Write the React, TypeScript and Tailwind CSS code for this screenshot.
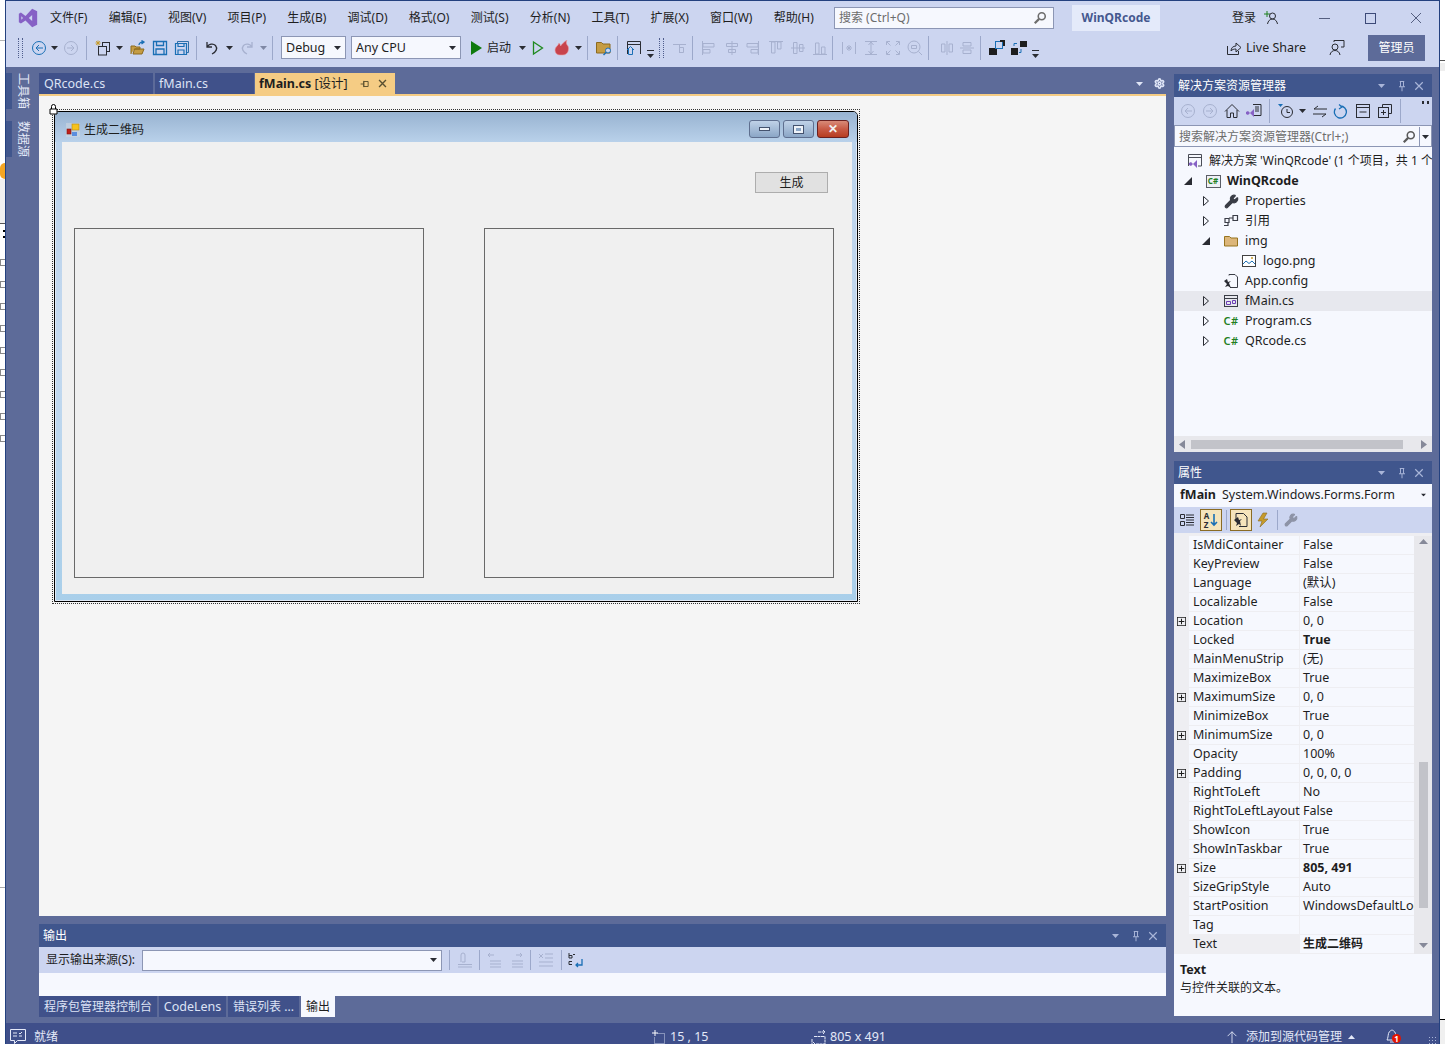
import type { ReactNode } from 'react';
import { Settings, Wrench } from 'lucide-react';

const menus = ['文件(F)', '编辑(E)', '视图(V)', '项目(P)', '生成(B)', '调试(D)', '格式(O)', '测试(S)', '分析(N)', '工具(T)', '扩展(X)', '窗口(W)', '帮助(H)'];

const props: { name: string; value: string; expand?: boolean; bold?: boolean; active?: boolean }[] = [
  { name: 'IsMdiContainer', value: 'False' },
  { name: 'KeyPreview', value: 'False' },
  { name: 'Language', value: '(默认)' },
  { name: 'Localizable', value: 'False' },
  { name: 'Location', value: '0, 0', expand: true },
  { name: 'Locked', value: 'True', bold: true },
  { name: 'MainMenuStrip', value: '(无)' },
  { name: 'MaximizeBox', value: 'True' },
  { name: 'MaximumSize', value: '0, 0', expand: true },
  { name: 'MinimizeBox', value: 'True' },
  { name: 'MinimumSize', value: '0, 0', expand: true },
  { name: 'Opacity', value: '100%' },
  { name: 'Padding', value: '0, 0, 0, 0', expand: true },
  { name: 'RightToLeft', value: 'No' },
  { name: 'RightToLeftLayout', value: 'False' },
  { name: 'ShowIcon', value: 'True' },
  { name: 'ShowInTaskbar', value: 'True' },
  { name: 'Size', value: '805, 491', expand: true, bold: true },
  { name: 'SizeGripStyle', value: 'Auto' },
  { name: 'StartPosition', value: 'WindowsDefaultLocation' },
  { name: 'Tag', value: '' },
  { name: 'Text', value: '生成二维码', bold: true, active: true },
];

const OFF = '#a7b1cf';
const BLUE = '#1a6fb5';
const INK = '#2a2c33';

// 16x16 绘图容器
const Ico = ({ children, className = '', size = 16 }: { children: ReactNode; className?: string; size?: number }) => (
  <svg width={size} height={size} viewBox="0 0 16 16" fill="none" className={`shrink-0 ${className}`}>
    {children}
  </svg>
);

const Caret = ({ className = '', color = '#2a2c33' }: { className?: string; color?: string }) => (
  <svg width="7" height="4" viewBox="0 0 7 4" className={`shrink-0 ${className}`}>
    <path d="M0 0h7L3.5 4z" fill={color} />
  </svg>
);

const Sep = ({ className = '' }: { className?: string }) => <span className={`h-[24px] w-px shrink-0 bg-[#9ca8ca] ${className}`} />;
const Grip = ({ className = '' }: { className?: string }) => <span className={`h-[20px] w-[5px] shrink-0 border-x border-dotted border-[#4f5d8c] ${className}`} />;

const Overflow = ({ className = '' }: { className?: string }) => (
  <svg width="7" height="8" viewBox="0 0 7 8" className={`shrink-0 ${className}`}>
    <path d="M0 0h7v1H0zM0 4h7L3.5 8z" fill="#2a2c33" />
  </svg>
);

const Circle = ({ dir, color, className = '' }: { dir: 'l' | 'r'; color: string; className?: string }) => (
  <Ico className={className}>
    <circle cx="8" cy="8" r="6.5" stroke={color} />
    <path d={dir === 'l' ? 'M12 8H5M8 5L5 8l3 3' : 'M4 8h7M8 5l3 3-3 3'} stroke={color} />
  </Ico>
);

const VsMark = ({ size, className = '' }: { size: number; className?: string }) => (
  <svg width={size} height={size} viewBox="0 0 24 24" className={`shrink-0 ${className}`}>
    <path fillRule="evenodd" d="M17 1l6 3v16l-6 3-8-8-5.500 3.500L1 17V7l2.500-1.500L9 9.500zM17 8.500L13 12l4 3.500zM4 10v4l2-2z" fill="#8661c5" />
  </svg>
);

const Disabled = ({ d, className = '' }: { d: string; className?: string }) => (
  <Ico className={className}>
    <path d={d} stroke={OFF} />
  </Ico>
);

const PanelHeader = ({ title, icons = '#a9b5d8' }: { title: string; icons?: string }) => (
  <div className="flex h-[23px] shrink-0 items-center bg-[#40568d] pl-[4px] text-[12px] text-white">
    <span className="flex-1">{title}</span>
    <Caret color={icons} />
    <Ico size={12} className="ml-[11px]">
      <path d="M5 2h6M6 2v7M10 2v7M4 9h8M8 9v6" stroke={icons} strokeWidth="1.300" />
    </Ico>
    <Ico size={12} className="ml-[5px] mr-[7px]">
      <path d="M3 3l10 10M13 3L3 13" stroke={icons} strokeWidth="1.600" />
    </Ico>
  </div>
);

const CSharp = ({ className = '' }: { className?: string }) => (
  <span className={`w-[16px] shrink-0 text-center text-[11px] font-semibold tracking-[0.5px] text-[#1f801f] ${className}`}>C#</span>
);

const TreeRow = ({ arrow, indent, icon, children, selected, bold, noSlot }: { arrow?: 'open' | 'closed'; indent: string; icon: ReactNode; children: ReactNode; selected?: boolean; bold?: boolean; noSlot?: boolean }) => (
  <div className={`flex h-[20px] items-center whitespace-nowrap ${indent} ${selected ? 'bg-[#e7e8ee]' : ''} ${bold ? 'font-bold' : ''}`}>
    {!noSlot && (
      <span className="mr-[12px] flex w-[16px] shrink-0 items-center justify-center pl-[5px]">
        {arrow === 'closed' && (
          <svg width="6" height="10" viewBox="0 0 6 10"><path d="M.500.500l5 4.500-5 4.500z" stroke="#2a2c33" fill="none" /></svg>
        )}
        {arrow === 'open' && (
          <svg width="8" height="8" viewBox="0 0 8 8"><path d="M8 0v8H0z" fill="#2a2c33" /></svg>
        )}
      </span>
    )}
    <span className="flex w-[16px] shrink-0 items-center justify-center">{icon}</span>
    <span className="ml-[6px]">{children}</span>
  </div>
);

const CaptionBtn = ({ children, className = '' }: { children: ReactNode; className?: string }) => (
  <span className={`flex h-[18px] items-center justify-center rounded-[3px] border border-[#5f6f8f] ${className}`}>{children}</span>
);

export default function App() {
  return (
    <div className="relative flex h-[1044px] w-[1445px] overflow-hidden bg-white font-['Noto_Sans','Noto_Sans_CJK_SC',sans-serif] text-[12.500px] leading-[18px] text-[#1e1e1e]">
      {/* 后面窗口露出的左边条 */}
      <div className="flex w-[5px] shrink-0 flex-col">
        <div className="mt-[40px] h-px bg-[#b5b5b5]" />
        <div className="mt-[122px] h-[16px] rounded-l-full bg-[#f5a623]" />
        <div className="h-[44px] bg-[#f0f0f0]" />
        <div className="h-px bg-[#555]" />
        <div className="ml-[3px] mt-[6px] h-[2px] w-[2px] bg-black" />
        <div className="ml-[3px] mt-[4px] h-[2px] w-[2px] bg-black" />
        {Array.from({ length: 9 }).map((_, i) => (
          <div key={i} className={`h-[7px] border border-r-0 border-[#888] bg-white ${i === 0 ? 'mt-[21px]' : 'mt-[15px]'}`} />
        ))}
        <div className="mt-[445px] h-px bg-[#aaa]" />
      </div>

      <div className="flex w-[1435px] shrink-0 flex-col border-x border-t border-[#24417f]">
        {/* 菜单栏 */}
        <div className="flex h-[32px] shrink-0 items-center whitespace-nowrap bg-[#ccd5f0] pt-[1px]">
          <VsMark size={20} className="ml-[12px]" />
          <div className="ml-[12px] flex w-[764px] shrink-0 justify-between text-[12px]">
            {menus.map((m) => (
              <span key={m}>{m}</span>
            ))}
          </div>
          <div className="ml-[20px] flex h-[22px] w-[220px] shrink-0 items-center border border-[#8c96b4] bg-[#f6f8fe] pl-[4px] pr-[6px] text-[12px] text-[#6d6d6d]">
            <span className="flex-1">搜索 (Ctrl+Q)</span>
            <Ico size={14}><circle cx="10" cy="6" r="4" stroke="#6d6d6d" strokeWidth="1.800" /><path d="M7 9l-5 5" stroke="#6d6d6d" strokeWidth="2.500" /></Ico>
          </div>
          <div className="ml-[18px] flex h-[26px] w-[88px] shrink-0 items-center justify-center bg-[#e4eafa] text-[12px] font-bold text-[#45588f]">WinQRcode</div>
          <span className="ml-[72px] w-[24px] shrink-0 text-[12px]">登录</span>
          <Ico className="ml-[8px]">
            <path d="M2 1v6M-1 4h6" stroke="#1f801f" transform="translate(1 0)" />
            <circle cx="8.500" cy="6" r="3" stroke={INK} />
            <path d="M3.500 14c.5-3 2.500-5 5-5s4.500 2 5 5" stroke={INK} />
          </Ico>
          <Ico className="ml-[36px]"><path d="M3 8.500h11" stroke="#555f80" /></Ico>
          <Ico className="ml-[30px]"><rect x="3.500" y="3.500" width="10" height="10" stroke="#3c4a78" /></Ico>
          <Ico className="ml-[30px]"><path d="M3 3l10 10M13 3L3 13" stroke="#555f80" /></Ico>
        </div>

        {/* 工具栏 */}
        <div className="flex h-[34px] shrink-0 items-center bg-[#ccd5f0] pb-[5px]">
          <Grip className="ml-[12px]" />
          <Circle dir="l" color={BLUE} className="ml-[8px]" />
          <Caret className="ml-[4px]" />
          <Circle dir="r" color={OFF} className="ml-[5px]" />
          <Sep className="ml-[7px]" />
          <Ico className="ml-[8px]">
            <path d="M3 .5v5M.5 3h5M1.200 1.200l3.600 3.600M4.800 1.200L1.200 4.800" stroke="#c69b2b" />
            <rect x="7.500" y="2.500" width="7" height="9" stroke={INK} fill="#ccd5f0" />
            <rect x="3.500" y="6.500" width="8" height="8.500" stroke={INK} fill="#ccd5f0" />
          </Ico>
          <Caret className="ml-[5px]" />
          <Ico className="ml-[7px]">
            <path d="M1 14V6h4l1 1h4v2H4.500L3 14h9l2-5H4.500" fill="#c59c43" stroke="#8c6a1f" />
            <path d="M9 5c0-2 2-3 4-3M11.500 .5L14 2l-2.500 2" stroke={BLUE} strokeWidth="1.300" />
          </Ico>
          <Ico className="ml-[6px]">
            <path d="M1.500 1.500h13v13h-13zM4.500 1.500v4h7v-4M4 14.500V9h8v5.500" stroke={BLUE} strokeWidth="1.300" />
          </Ico>
          <Ico className="ml-[6px]">
            <path d="M3.500 3V1.500h11v11H13" stroke="#2f6fa8" />
            <path d="M1.500 3.500h11v11h-11zM4 3.500v3h6v-3M4 14.500V10h6v4.500" stroke={BLUE} strokeWidth="1.200" />
          </Ico>
          <Sep className="ml-[6px]" />
          <Ico className="ml-[7px]">
            <path d="M3 2v5h5M3 7c2-3 6-4 8.500-1.500 2.500 3 .5 6.500-3.500 8.500" stroke={INK} strokeWidth="1.300" />
          </Ico>
          <Caret className="ml-[6px]" />
          <Ico className="ml-[6px] -scale-x-100">
            <path d="M3 2v5h5M3 7c2-3 6-4 8.500-1.500 2.500 3 .5 6.500-3.500 8.500" stroke={OFF} strokeWidth="1.300" />
          </Ico>
          <Caret className="ml-[5px]" color="#7f88a5" />
          <Sep className="ml-[5px]" />
          <div className="ml-[8px] flex h-[23px] w-[65px] shrink-0 items-center justify-between border border-[#8c96b4] bg-[#f6f8fe] pl-[4px] pr-[4px]">
            <span>Debug</span>
            <Caret />
          </div>
          <div className="ml-[5px] flex h-[23px] w-[110px] shrink-0 items-center justify-between border border-[#8c96b4] bg-[#f6f8fe] pl-[4px] pr-[4px]">
            <span>Any CPU</span>
            <Caret />
          </div>
          <Ico className="ml-[7px]"><path d="M3 1l11 7-11 7z" fill="#0e7a0d" /></Ico>
          <span className="ml-[3px] w-[26px] shrink-0 text-[12px]">启动</span>
          <Caret className="ml-[6px]" />
          <Ico className="ml-[4px]"><path d="M3.500 2l9 6-9 6z" stroke="#1f8a1f" strokeWidth="1.300" /></Ico>
          <Ico className="ml-[8px]">
            <path d="M6 15c-3 0-5-2-5-5 0-3 3-4 4-7 1 1 1.500 2 1.500 3C8 4 10 2 13 0c-1 2-1 4 1 6 1.500 3 0 9-5 9z" fill="#c8434c" stroke="#e9a0a6" strokeWidth=".6" />
          </Ico>
          <Caret className="ml-[5px]" />
          <Sep className="ml-[5px]" />
          <Ico className="ml-[8px]">
            <path d="M.5 2.500h5l1.500 1.500h7v9H.5z" fill="#c59c43" stroke="#8c6a1f" />
            <circle cx="12" cy="10.500" r="2.500" fill="#ccd5f0" stroke={BLUE} />
            <path d="M10 12.500L7.500 15" stroke={BLUE} strokeWidth="1.500" />
          </Ico>
          <Sep className="ml-[5px]" />
          <Ico className="ml-[8px]">
            <path d="M1.500 14V1.500h13V14M1.500 4.500h13" stroke={INK} />
            <path d="M1 10l3.500-3.500L8 10M2.500 9v5.500h4V9" stroke={BLUE} fill="#ccd5f0" />
          </Ico>
          <Overflow className="ml-[5px] mt-[12px]" />
          <Grip className="ml-[5px]" />
          <Disabled className="ml-[8px]" d="M1 4.500h13M7.500 4.500V13M7.500 7.500h4v5h-4" />
          <Sep className="ml-[4px]" />
          <Disabled className="ml-[8px]" d="M1.500 1v14M2 3.500h11v3.500H2zM2 9.500h7v3.500H2z" />
          <Disabled className="ml-[7px]" d="M8 1v14M2.500 3.500h11v3h-11zM4.500 9.500h7v3h-7z" />
          <Disabled className="ml-[4px]" d="M14.500 1v14M3 3.500h11v3.500H3zM7 9.500h7v3.500H7z" />
          <Disabled className="ml-[8px]" d="M1 1.500h14M3.500 2v11H7V2zM9.500 2v7H13V2z" />
          <Disabled className="ml-[6px]" d="M1 8h14M3.500 2.500H7v11H3.500zM9.500 4.500H13v7H9.500z" />
          <Disabled className="ml-[6px]" d="M1 14.500h14M3.500 3H7v11H3.500zM9.500 7H13v7H9.500z" />
          <Sep className="ml-[4px]" />
          <Disabled className="ml-[8px]" d="M1.500 2v12M14.500 2v12M5 8h6M8 5v6M6 6l4 4M10 6l-4 4" />
          <Disabled className="ml-[6px]" d="M2 1.500h12M2 14.500h12M8 2v12M5.500 5L8 2l2.500 3M5.500 11L8 14l2.500-3" />
          <Disabled className="ml-[6px]" d="M1.500 5V1.500H5M11 1.500h3.500V5M14.500 11v3.500H11M5 14.500H1.500V11M2 2l3.500 3.500M14 2l-3.500 3.500M14 14l-3.500-3.500M2 14l3.500-3.500" />
          <Ico className="ml-[6px]"><circle cx="7" cy="7" r="6" stroke={OFF} /><path d="M11.500 11.500L15 15M4.500 5.500v3h5v-3z" stroke={OFF} /></Ico>
          <Sep className="ml-[5px]" />
          <Disabled className="ml-[10px]" d="M8 1v14M2.500 4H6v8H2.500zM10 4h3.500v8H10z" />
          <Disabled className="ml-[4px]" d="M1 8h14M4 2.500h8V6H4zM4 10h8v3.500H4z" />
          <Sep className="ml-[5px]" />
          <Ico className="ml-[8px]">
            <path d="M0 8h8v7H0z" fill="#1e1e1e" />
            <rect x="6.500" y="1.500" width="7" height="7" fill="#ccd5f0" stroke={BLUE} />
            <path d="M11 0h5v6h-2V2h-3z" fill="#1e1e1e" />
          </Ico>
          <Ico className="ml-[6px]">
            <path d="M0 8h7v7H0zM9 1h7v6H9z" fill="#1e1e1e" />
            <path d="M3 6V3.500h3M10 9v3.500H8" stroke={BLUE} />
          </Ico>
          <Overflow className="ml-[5px] mt-[12px]" />
          <Ico className="ml-[187px]">
            <path d="M1.500 6v8.500h11V11" stroke={INK} />
            <path d="M5 11c0-3 2-5 5-5V3l5 4.500L10 12V9c-2 0-4 .5-5 2z" stroke={INK} />
          </Ico>
          <span className="ml-[4px] w-[66px] shrink-0 whitespace-nowrap">Live Share</span>
          <Ico className="ml-[17px]">
            <circle cx="6" cy="7" r="3" stroke={INK} />
            <path d="M1 15c.5-3 2.500-4.500 5-4.500s4.500 1.500 5 4.500M5 2V.5h10V7h-3" stroke={INK} />
          </Ico>
          <div className="ml-[23px] flex h-[26px] w-[57px] shrink-0 items-center justify-center bg-[#5d6b99] text-[12px] text-white">管理员</div>
        </div>

        {/* 主体 */}
        <div className="flex min-h-0 flex-1 bg-[#5d6b99]">
          {/* 侧边工具条 */}
          <div className="flex w-[33px] shrink-0 flex-col gap-[12px] pt-[6px]">
            {['工具箱', '数据源'].map((t) => (
              <div key={t} className="flex h-[36px]">
                <span className="w-[6px] bg-[#40568d]" />
                <span className="ml-[4px] text-[12px] leading-[14px] text-[#e4e9f8] [text-orientation:sideways] [writing-mode:vertical-lr]">{t}</span>
              </div>
            ))}
          </div>

          {/* 中间 */}
          <div className="flex w-[1127px] shrink-0 flex-col">
            <div className="mt-[6px] flex h-[21px] shrink-0 items-center">
              <div className="flex h-full w-[114px] items-center bg-[#40518a] pl-[5px] text-[#dde3f5]">QRcode.cs</div>
              <div className="ml-[2px] flex h-full w-[99px] items-center bg-[#40518a] pl-[4px] text-[#dde3f5]">fMain.cs</div>
              <div className="ml-px flex h-full w-[140px] items-center whitespace-nowrap bg-[#f5cc84] pl-[4px]">
                <span className="w-[96px] font-bold">fMain.cs <span className="font-normal">[设计]</span></span>
                <Ico size={10} className="ml-[5px]"><path d="M1 8h5M6 4h7v8H6zM6 3v10" stroke="#5a5030" strokeWidth="1.500" /></Ico>
                <Ico size={11} className="ml-[7px]"><path d="M3 3l10 10M13 3L3 13" stroke="#5a5030" strokeWidth="2" /></Ico>
              </div>
              <Caret className="ml-auto" color="#dfe5f6" />
              <Settings size={11} strokeWidth={3.500} className="ml-[11px] mr-[1px] text-[#dfe5f6]" />
            </div>
            <div className="h-[2px] shrink-0 bg-[#f5cc84]" />

            {/* 设计器 */}
            <div className="h-[820px] shrink-0 bg-[#f5f5f5] pl-[13px] pt-[13px]">
              <div className="relative h-[495px] w-[808px] border border-dotted border-[#333] p-px">
                <svg width="9" height="11" viewBox="0 0 9 11" className="absolute -left-[4px] -top-[6px]">
                  <path d="M1 5h7v5H1zM2.500 5V2.500a2 2 0 014 0V5" stroke="#000" fill="#fff" />
                </svg>
                <div className="flex h-full flex-col rounded-t-[5px] border border-black bg-gradient-to-b from-[#b9d1ea] via-[#c4d9ef] to-[#a9cfea] shadow-[inset_0_0_0_1px_#dfe9f5]">
                  <div className="flex h-[30px] shrink-0 items-center rounded-t-[4px] bg-gradient-to-b from-[#98b3d1] to-[#b9d1ea] pl-[11px] pt-[6px]">
                    <svg width="14" height="14" viewBox="0 0 14 14" className="shrink-0">
                      <rect x="0" y="0" width="14" height="14" fill="#d5d9e0" opacity=".5" />
                      <rect x="6" y="1" width="7" height="6" fill="#f6c21c" stroke="#b98a10" strokeWidth=".6" />
                      <rect x="1" y="6" width="4" height="5" fill="#c0201a" stroke="#801510" strokeWidth=".6" />
                      <rect x="6" y="9" width="5" height="4" fill="#5b8ede" />
                    </svg>
                    <span className="ml-[4px] text-[12px]">生成二维码</span>
                    <div className="ml-[605px] -mt-[2px] flex gap-[3px]">
                      <CaptionBtn className="w-[31px] bg-gradient-to-b from-[#c0d2e8] to-[#8ba6c6]">
                        <span className="h-[4px] w-[11px] border border-[#44526e] bg-[#eef2f8]" />
                      </CaptionBtn>
                      <CaptionBtn className="w-[31px] bg-gradient-to-b from-[#c0d2e8] to-[#8ba6c6]">
                        <span className="flex h-[9px] w-[11px] items-center justify-center border border-[#44526e] bg-[#eef2f8]"><span className="h-[3px] w-[5px] bg-[#8ba6c6]" /></span>
                      </CaptionBtn>
                      <CaptionBtn className="w-[32px] border-[#6a2020] bg-gradient-to-b from-[#d88a78] via-[#c85a45] to-[#b63c20]">
                        <span className="text-[12px] font-bold leading-none text-[#f2f2f2]">✕</span>
                      </CaptionBtn>
                    </div>
                  </div>
                  <div className="ml-[7px] h-[452px] w-[790px] shrink-0 bg-[#f0f0f0] pt-[30px]">
                    <div className="ml-[693px] flex h-[21px] w-[73px] items-center justify-center border border-[#adadad] bg-[#e1e1e1] pt-px text-[12px]">生成</div>
                    <div className="ml-[12px] mt-[35px] flex gap-[60px]">
                      <div className="h-[350px] w-[350px] border border-[#696969]" />
                      <div className="h-[350px] w-[350px] border border-[#696969]" />
                    </div>
                  </div>
                </div>
              </div>
            </div>

            {/* 输出 */}
            <div className="mt-[8px] flex min-h-0 flex-1 flex-col">
              <PanelHeader title="输出" />
              <div className="flex h-[26px] shrink-0 items-center bg-[#ccd5f0]">
                <span className="ml-[7px] w-[96px] shrink-0 whitespace-nowrap text-[12px]">显示输出来源(S):</span>
                <div className="flex h-[21px] w-[300px] shrink-0 items-center justify-end border border-[#8c96b4] bg-[#f6f8fe] pr-[4px]"><Caret /></div>
                <Sep className="ml-[7px] !h-[20px]" />
                <Disabled className="ml-[7px]" d="M4 10V3a2 2 0 014 0v7H5M1 12.500h14M1 15h14" />
                <Sep className="ml-[6px] !h-[20px]" />
                <Disabled className="ml-[6px]" d="M8 3H2M4 1L2 3l2 2M4 9h11M4 12h11M4 15h11" />
                <Disabled className="ml-[6px]" d="M8 3h6M12 1l2 2-2 2M4 9h11M4 12h11M4 15h11" />
                <Sep className="ml-[6px] !h-[20px]" />
                <Disabled className="ml-[7px]" d="M1 2l4 4M5 2L1 6M7 2h8M7 6h8M1 10h14M1 14h14" />
                <Sep className="ml-[7px] !h-[20px]" />
                <Ico className="ml-[6px]">
                  <path d="M1 1v5h3V3.500H1M7 2.500H5M1 9.500h3M1 9.500v3h3" stroke={INK} />
                  <path d="M14 7v6H8M10 11l-2 2 2 2" stroke={BLUE} strokeWidth="1.300" />
                </Ico>
              </div>
              <div className="h-[23px] shrink-0 bg-[#f6f8fe]" />
              <div className="flex h-[21px] shrink-0 items-center whitespace-nowrap text-[#dde3f5]">
                <span className="flex h-full w-[118px] items-center justify-center bg-[#40518a] text-[12px]">程序包管理器控制台</span>
                <span className="ml-[2px] flex h-full w-[67px] items-center justify-center bg-[#40518a]">CodeLens</span>
                <span className="ml-[2px] flex h-full w-[71px] items-center justify-center bg-[#40518a] text-[12px]">错误列表 ...</span>
                <span className="ml-[2px] flex h-full w-[34px] items-center justify-center bg-[#f6f8fe] text-[12px] text-[#1e1e1e]">输出</span>
              </div>
            </div>
          </div>

          {/* 右侧面板 */}
          <div className="ml-[8px] flex w-[258px] shrink-0 flex-col pt-[7px]">
            <PanelHeader title="解决方案资源管理器" />
            <div className="relative flex h-[28px] shrink-0 items-center bg-[#ccd5f0]">
              <Circle dir="l" color={OFF} className="ml-[6px]" />
              <Circle dir="r" color={OFF} className="ml-[6px]" />
              <Ico className="ml-[6px]"><path d="M1 8.500L8 1.500l7 7M3 7v7.500h3.500V10h3v4.500H13V7" stroke={INK} /></Ico>
              <Ico className="ml-[6px]">
                <path d="M7 1.500h8v11H7" stroke={INK} />
                <path d="M9 4h4M9 6h4M9 8h4" stroke={INK} />
                <path d="M0 9l2-1 2 2 4-4v8l-4-4-2 2-2-1z" fill="#8661c5" />
              </Ico>
              <Sep className="ml-[7px]" />
              <Ico className="ml-[8px]">
                <path d="M0 1h5L2.500 4z" fill={BLUE} />
                <circle cx="9" cy="9" r="5.500" stroke={INK} />
                <path d="M9 6v3.500h3" stroke={INK} />
              </Ico>
              <Caret className="ml-[5px]" />
              <Ico className="ml-[6px]"><path d="M6 3L2 6h13M10 14l4-3H1" stroke={INK} /></Ico>
              <Ico className="ml-[5px]"><path d="M6 1.500L9 4 6 6M7 3a6 6 0 11-4.500 2.500" stroke={BLUE} strokeWidth="1.300" /></Ico>
              <Ico className="ml-[6px]"><rect x="1.500" y="1.500" width="13" height="13" stroke={INK} /><path d="M1 4.500h14M4.500 9h7" stroke={INK} /></Ico>
              <Ico className="ml-[6px]"><path d="M5.500 4.500v-3h9v9h-3" stroke={INK} /><rect x="1.500" y="4.500" width="10" height="10" stroke={INK} /><path d="M4 9.500h5M6.500 7v5" stroke={INK} /></Ico>
              <Sep className="ml-[7px]" />
              <span className="absolute right-[3px] top-[4px] flex gap-[3px]">
                <span className="h-[3px] w-[2px] bg-[#2a2c33]" />
                <span className="h-[3px] w-[2px] bg-[#2a2c33]" />
              </span>
            </div>
            <div className="flex h-[22px] shrink-0 items-center border border-[#8c96b4] bg-[#f6f8fe] pl-[4px] pt-px text-[12px] text-[#6d6d6d]">
              <span className="flex-1 whitespace-nowrap">搜索解决方案资源管理器(Ctrl+;)</span>
              <Ico size={14} className="mr-[3px]"><circle cx="10" cy="6" r="4" stroke="#5a5a5a" strokeWidth="1.800" /><path d="M7 9l-5 5" stroke="#5a5a5a" strokeWidth="2.500" /></Ico>
              <span className="flex h-full w-[12px] items-center justify-center border-l border-[#8c96b4]"><Caret /></span>
            </div>

            <div className="flex h-[305px] shrink-0 flex-col overflow-hidden bg-[#f6f8fe]">
              <div className="flex-1 overflow-hidden pt-[4px]">
                <TreeRow noSlot indent="pl-[13px] text-[12px]" icon={
                  <Ico>
                    <path d="M1.500 13V1.500h13V13H11M1.500 4.500h13" stroke="#4a4d57" />
                    <path d="M2 10l2-1 2 2 4-4v8l-4-4-2 2-2-1z" fill="#8661c5" />
                  </Ico>
                }>
                  <span>解决方案 'WinQRcode' (1 个项目，共 1 个)</span>
                </TreeRow>
                <TreeRow arrow="open" indent="pl-[3px]" bold icon={
                  <span className="flex h-[13px] w-[15px] items-center justify-center border border-[#5a5d66] bg-[#eef0f5] text-[8px] font-bold leading-none text-[#1f801f]">C#</span>
                }>WinQRcode</TreeRow>
                <TreeRow arrow="closed" indent="pl-[21px]" icon={<Wrench size={15} className="fill-[#3a3d46] text-[#3a3d46]" />}>Properties</TreeRow>
                <TreeRow arrow="closed" indent="pl-[21px]" icon={
                  <Ico><path d="M10 2.500h4.500v5H10zM2 5.500h4v4H2zM10 5H6M1 12.500h4v-3" stroke="#3a3d46" strokeWidth="1.200" /></Ico>
                }>引用</TreeRow>
                <TreeRow arrow="open" indent="pl-[21px]" icon={
                  <Ico><path d="M1.500 13V3.500h5L8 5h6.500v8z" fill="#dcb67a" stroke="#97741f" /></Ico>
                }>img</TreeRow>
                <TreeRow indent="pl-[39px]" icon={
                  <Ico><rect x="1.500" y="2.500" width="13" height="11" fill="#fff" stroke="#424242" /><path d="M2 11l3-3 3 2.500L11 8l3 3" stroke={BLUE} /><circle cx="11" cy="5" r="1" fill="#c69b2b" /></Ico>
                }>logo.png</TreeRow>
                <TreeRow indent="pl-[21px]" icon={
                  <Ico><path d="M6 2.500V1.500h6l2.500 2.500v10.500H7" stroke="#3a3d46" /><path d="M1 8l3 3-2 3 3-1 3 2-2-5 2-2-3 1-1-3z" fill="#2a2c33" /></Ico>
                }>App.config</TreeRow>
                <TreeRow arrow="closed" indent="pl-[21px]" selected icon={
                  <Ico><rect x="1.500" y="2.500" width="13" height="11" stroke="#3a3d46" /><path d="M1.500 5.500h13" stroke="#3a3d46" /><path d="M3.500 8.500h4v3h-4zM9.500 7.500h3v3h-3z" stroke="#6c3fb5" /></Ico>
                }>fMain.cs</TreeRow>
                <TreeRow arrow="closed" indent="pl-[21px]" icon={<CSharp />}>Program.cs</TreeRow>
                <TreeRow arrow="closed" indent="pl-[21px]" icon={<CSharp />}>QRcode.cs</TreeRow>
              </div>
              <div className="flex h-[16px] shrink-0 items-center bg-[#e8e8ec] px-[5px]">
                <svg width="6" height="9" viewBox="0 0 6 9"><path d="M6 0v9L0 4.500z" fill="#868999" /></svg>
                <span className="ml-[6px] h-[9px] w-[212px] bg-[#c2c3c9]" />
                <svg width="6" height="9" viewBox="0 0 6 9" className="ml-auto"><path d="M0 0v9l6-4.500z" fill="#868999" /></svg>
              </div>
            </div>

            <div className="mt-[9px] flex min-h-0 flex-1 flex-col">
              <PanelHeader title="属性" />
              <div className="flex h-[23px] shrink-0 items-center whitespace-nowrap bg-[#f6f8fe] pb-[2px] pl-[6px]">
                <span className="font-bold">fMain</span>
                <span className="ml-[6px] flex-1">System.Windows.Forms.Form</span>
                <Caret className="mr-[5px] scale-75" />
              </div>
              <div className="flex h-[26px] shrink-0 items-center bg-[#ccd5f0] pl-[5px]">
                <Ico>
                  <path d="M1.500 2.500h4v4h-4zM1.500 9.500h4v4h-4zM7 3h8M7 5.500h8M7 8h8M7 10.500h8M7 13h8" stroke={INK} />
                </Ico>
                <span className="ml-[5px] flex h-[22px] w-[22px] items-center justify-center gap-px border border-[#8a6b24] bg-[#f5e4bc]">
                  <span className="flex flex-col text-[8px] font-bold leading-[9px] text-[#2a2c33]">
                    <span>A</span>
                    <span>Z</span>
                  </span>
                  <svg width="8" height="14" viewBox="0 0 8 14"><path d="M4 1v11M1 9l3 3 3-3" stroke={BLUE} strokeWidth="1.600" fill="none" /></svg>
                </span>
                <Sep className="ml-[4px] !h-[20px]" />
                <span className="ml-[3px] flex h-[22px] w-[22px] items-center justify-center border border-[#8a6b24] bg-[#f5e4bc]">
                  <Ico><path d="M3 8V1.500h7.500L14 5v9.500H6" stroke={INK} /><path d="M1 8l3 3-1 3 3-2 2 2-1-5 2-2-3 1-1-3z" fill="#2a2c33" /></Ico>
                </span>
                <Ico className="ml-[3px]"><path d="M8 1L3 9h4l-2 6 8-8H8.500L12 1z" fill="#c69b2b" stroke="#8a6b24" strokeWidth=".6" /></Ico>
                <Sep className="ml-[6px] !h-[20px]" />
                <Wrench size={14} className="ml-[6px] fill-[#8d93a6] text-[#8d93a6]" />
              </div>
              <div className="flex h-[421px] shrink-0 overflow-hidden bg-[#eeeef2] pt-[3px]">
                <div className="w-[240px] shrink-0">
                  {props.map((p) => (
                    <div key={p.name} className="flex h-[19px] items-center whitespace-nowrap">
                      <span className="flex w-[15px] shrink-0 justify-center">
                        {p.expand && (
                          <Ico size={9}><path d="M.500.500h15v15H.500zM3 8h10M8 3v10" stroke="#1e1e1e" strokeWidth="1.800" /></Ico>
                        )}
                      </span>
                      <span className={`flex h-full w-[111px] shrink-0 items-center border-b border-r border-[#eeeef2] pl-[4px] ${p.active ? 'bg-[#eeeef2]' : 'bg-[#f6f8fe]'}`}>{p.name}</span>
                      <span className={`flex h-full w-[114px] shrink-0 items-center overflow-hidden border-b border-[#eeeef2] bg-[#f6f8fe] pl-[3px] ${p.bold ? 'font-bold' : ''} ${p.active ? 'text-[12px]' : ''}`}>{p.value}</span>
                    </div>
                  ))}
                </div>
                <div className="flex w-[18px] shrink-0 flex-col items-center bg-[#e8e8ec] pt-[3px]">
                  <svg width="9" height="5" viewBox="0 0 9 5"><path d="M0 5h9L4.500 0z" fill="#868999" /></svg>
                  <span className="ml-px mt-[218px] h-[146px] w-[9px] bg-[#c2c3c9]" />
                  <svg width="9" height="5" viewBox="0 0 9 5" className="mt-[35px]"><path d="M0 0h9L4.500 5z" fill="#868999" /></svg>
                </div>
              </div>
              <div className="h-[62px] shrink-0 bg-[#f6f8fe] pl-[6px] pt-[7px]">
                <div className="font-bold">Text</div>
                <div className="text-[12px]">与控件关联的文本。</div>
              </div>
              <div className="h-[6px] shrink-0" />
            </div>
          </div>
        </div>

        {/* 状态栏 */}
        <div className="flex h-[21px] shrink-0 items-start overflow-hidden bg-[#3f4f8a] pt-[5px] text-[12px] text-[#e4e9f8]">
          <div className="flex w-[644px] shrink-0 items-center">
            <Ico className="ml-[4px] -mt-[1px]"><path d="M.5 .5h15v11h-8l-3 3v-3h-4zM3 4h4M3 7h4M9 4l1 1 2-2M9 7h3" stroke="#e4e9f8" /></Ico>
            <span className="ml-[8px]">就绪</span>
          </div>
          <div className="flex w-[161px] shrink-0 items-center">
            <Ico><path d="M2 4h6M5 1v6" stroke="#fff" /><path d="M7.500 4.500h7v10h-10v-7" stroke="#cfd6ea" strokeDasharray="1 1" /></Ico>
            <span className="ml-[4px] text-[12.500px]">15 , 15</span>
          </div>
          <div className="flex w-[414px] shrink-0 items-center">
            <Ico><path d="M7 3h7M12 1l2 2-2 2M1 10v5M4 15l-2-2M3 7.500h11V15H5" stroke="#e4e9f8" strokeDasharray="3 .5" /></Ico>
            <span className="ml-[3px] text-[12.500px]">805 x 491</span>
          </div>
          <div className="flex w-[160px] shrink-0 items-center">
            <Ico size={14}><path d="M8 15V2M3 7l5-5 5 5" stroke="#e4e9f8" /></Ico>
            <span className="ml-[7px] whitespace-nowrap">添加到源代码管理</span>
            <Caret className="ml-[6px] rotate-180" color="#e4e9f8" />
          </div>
          <div className="relative ml-[-1px] flex items-center">
            <Ico><path d="M3 12c1-2 1-4 1.500-6.500S8 2 8 2s3 1 3.500 3.500S12 10 13 12zM6 14h4" stroke="#e4e9f8" /></Ico>
            <span className="absolute left-[8px] top-[6px] flex h-[9px] w-[9px] items-center justify-center rounded-full bg-[#e51400] text-[8px] font-bold leading-none text-white">1</span>
          </div>
          <span className="ml-[28px] mt-[8px] h-[8px] w-[8px] shrink-0 bg-[radial-gradient(#a9b5d8_1px,transparent_1px)] bg-[length:3px_3px]" />
        </div>
      </div>

      {/* 右边条 */}
      <div className="flex w-[5px] shrink-0 flex-col">
        <div className="mt-[60px] h-px bg-[#555]" />
        <div className="mt-[2px] h-[8px] bg-[#eee]" />
        <div className="mt-[948px] h-px bg-black" />
        <div className="h-[25px] bg-[#f0f0f0]" />
      </div>
    </div>
  );
}
